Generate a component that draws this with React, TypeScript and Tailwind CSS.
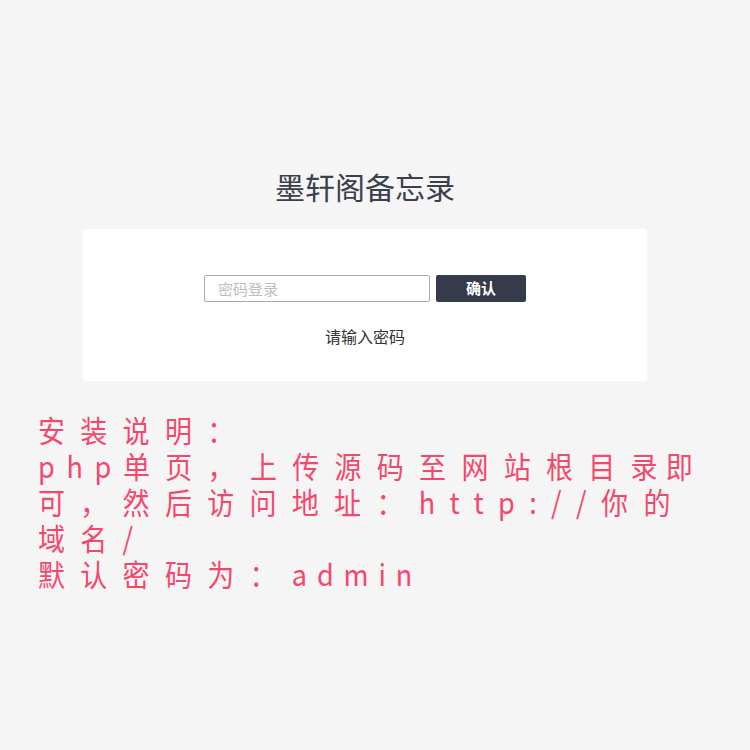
import React from "react";

const cjk = '"Noto Sans CJK SC", "Noto Sans", sans-serif';

// latin runs in the notice use their own spacing, set per run
const Latin = ({ children, className }: { children: React.ReactNode; className: string }) => (
  <span className={className}>{children}</span>
);

export default function App() {
  return (
    <div className="min-h-[750px] w-full bg-[#f5f5f5]" style={{ fontFamily: cjk }}>
      <div className="ml-[83px] w-[564px] pt-[166px]">
        <h1 className="text-center text-[30px] leading-[40px] text-[#3b404d]">墨轩阁备忘录</h1>
        <div className="mt-[23px] h-[152px] rounded-[3px] bg-white pt-[46px]">
          <div className="flex justify-center gap-[6px]">
            <input
              type="password"
              placeholder="密码登录"
              className="h-[27px] w-[226px] rounded-[2px] border border-[#a9a9a9] bg-white px-[13px] text-[15px] text-[#333] outline-none placeholder:text-[#bdbdbd]"
            />
            <button className="h-[27px] w-[90px] rounded-[2px] bg-[#353b4b] text-[15px] font-bold text-white">
              确认
            </button>
          </div>
          <p className="mt-[22px] text-center text-[16px] leading-[24px] text-[#333]">请输入密码</p>
        </div>
      </div>
      <div className="ml-[38px] mt-[30px] w-[800px] origin-left scale-x-[0.9] text-[30px] leading-[36px] tracking-[17px] text-[#f4476c]">
        <div>安装说明：</div>
        <div>
          <Latin className="tracking-[13px]">php</Latin>单页，上传源码至网站根目<span className="tracking-[9px]">录</span>即
        </div>
        <div>
          可，然后访问地址：<Latin className="tracking-[16px]">http://</Latin>你的
        </div>
        <div>
          域名<Latin className="tracking-[16px]">/</Latin>
        </div>
        <div>
          默认密码为：<Latin className="tracking-[11px]">admin</Latin>
        </div>
      </div>
    </div>
  );
}
